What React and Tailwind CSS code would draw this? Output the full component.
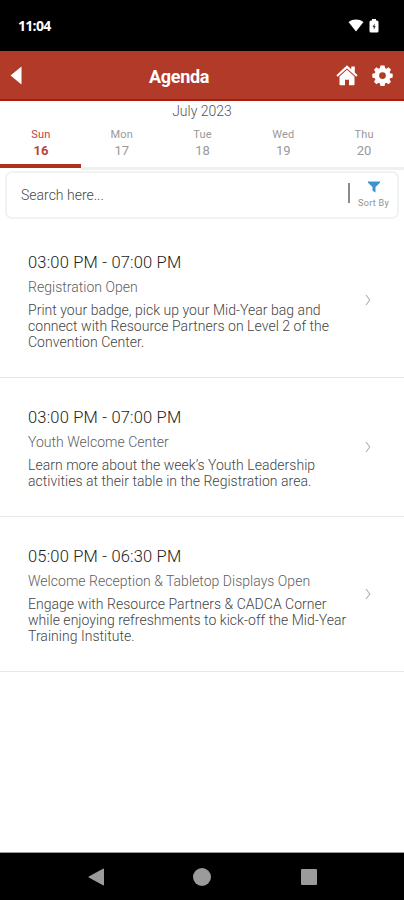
const days = [
  { name: 'Sun', date: '16', active: true },
  { name: 'Mon', date: '17' },
  { name: 'Tue', date: '18' },
  { name: 'Wed', date: '19' },
  { name: 'Thu', date: '20' },
];

const sessions = [
  {
    time: '03:00 PM - 07:00 PM',
    title: 'Registration Open',
    lines: ['Print your badge, pick up your Mid-Year bag and', 'connect with Resource Partners on Level 2 of the', 'Convention Center.'],
  },
  {
    time: '03:00 PM - 07:00 PM',
    title: 'Youth Welcome Center',
    lines: ['Learn more about the week’s Youth Leadership', 'activities at their table in the Registration area.'],
  },
  {
    time: '05:00 PM - 06:30 PM',
    title: 'Welcome Reception & Tabletop Displays Open',
    lines: ['Engage with Resource Partners & CADCA Corner', 'while enjoying refreshments to kick-off the Mid-Year', 'Training Institute.'],
  },
];

function StatusBar() {
  return (
    <div className="flex h-[51px] items-center justify-between bg-black pr-[25px] pl-[18px] text-white">
      <span className="pt-px font-['Open_Sans',sans-serif] text-[14px] leading-none font-bold tracking-[-0.7px]">11:04</span>
      <div className="flex items-center gap-[5px]">
        <svg width="16" height="13" viewBox="0 0 16 13" fill="#fff">
          <path d="M.5 3C4.800-.3 11.200-.3 15.500 3L8 12.500Z" />
        </svg>
        <svg width="10" height="14" viewBox="0 0 10 14">
          <path d="M3 0h4v1.500h1q1.500 0 1.500 1.500v9q0 1.500-1.500 1.500H2Q.5 13.500.5 12V3Q.5 1.500 2 1.500h1Z" fill="#fff" />
          <path d="M5.600 4.500 3.500 8.100h1.300V10.800L6.700 7.200H5.600Z" fill="#333" />
        </svg>
      </div>
    </div>
  );
}

function Header() {
  return (
    <div className="flex h-[50px] items-center border-b-2 border-[#ad1c0b] bg-[#b23a29] pr-[11px] pl-[10px]">
      <svg width="12" height="19" viewBox="0 0 12 19" fill="#fff">
        <path d="M11.500.5v18L.5 9.500Z" />
      </svg>
      <h1 className="ml-[127px] grow pt-[3px] text-[18px] leading-none font-bold tracking-[-0.3px] text-white">Agenda</h1>
      <svg className="mr-[14px]" width="22" height="21" viewBox="0 0 22 21" fill="#fff">
        <path d="M11 .3 .4 10.200l1.300 1.500L11 3.400l9.300 8.300 1.300-1.500-2.800-2.700V1.500h-3.500v2.800Z" />
        <path d="M11 4.800 3.500 11.600v7.900q0 .8.800.8h4.700v-5.500h4v5.500h4.700q.8 0 .8-.8v-7.900Z" />
      </svg>
      <svg width="21" height="21" viewBox="0 0 21 21" fill="#fff">
        <path
          fillRule="evenodd"
          d="M8.500 .6h4l.6 2.500 1.300.6 2.200-1.400 2.400 2.400-1.400 2.200.6 1.300 2.500.5v3.900l-2.500.6-.6 1.300 1.400 2.200-2.400 2.500-2.200-1.400-1.300.6-.6 2.500h-4l-.6-2.500-1.300-.6-2.200 1.400-2.400-2.500 1.400-2.200-.6-1.300-2.500-.6V8.700l2.500-.5.6-1.300L2 4.700l2.400-2.400 2.200 1.400 1.300-.6ZM10.500 7.200a3.400 3.400 0 1 0 0 6.800 3.400 3.400 0 0 0 0-6.800Z"
        />
      </svg>
    </div>
  );
}

function DayTabs() {
  return (
    <div className="h-[68px] bg-white">
      <div className="h-[26px] pt-[2px] text-center text-[14px] leading-4 font-light text-[#555]">July 2023</div>
      <div className="grid grid-cols-5 text-center">
        {days.map((d) => (
          <div
            key={d.name}
            className={
              d.active
                ? 'h-[41px] border-b-[4px] border-[#b03020] text-[#b8453a]'
                : 'h-[43px] border-b-[3px] border-[#f0f0f0] text-[#999]'
            }
          >
            <div className="pl-px text-[11px] leading-4 tracking-[0.2px]">{d.name}</div>
            <div className="pl-px text-[13px] leading-4">{d.active ? <b>{d.date}</b> : d.date}</div>
          </div>
        ))}
      </div>
    </div>
  );
}

function SearchBox() {
  return (
    <div className="h-[54px] px-[5px] pt-[2px]">
      <div className="flex h-[48px] items-center rounded-[7px] border-2 border-[#f1f3f3] bg-white pr-[8px] pl-[14px]">
        <span className="grow pt-px text-[14px] font-light text-[#484848]">Search here...</span>
        <span className="mr-[8px] mb-[5px] h-[20px] w-[2px] bg-[#8a8a8a]" />
        <div className="flex flex-col items-center">
          <svg width="12" height="12" viewBox="0 0 12 12" fill="#3b93cf">
            <path d="M0 .5h12v1.300L7.500 6v5.500L4.500 9.800V6L0 1.800Z" />
          </svg>
          <span className="mt-[4px] text-[9px] leading-[12px] tracking-[0.3px] whitespace-nowrap text-[#909090]">Sort By</span>
        </div>
      </div>
    </div>
  );
}

function Session({ time, title, lines }) {
  return (
    <div className="flex items-center justify-between border-b-[1.500px] border-[#e8e8e8] pr-[33px] pl-[28px]">
      <div className="pt-[30px] pb-[27px] whitespace-nowrap">
        <div className="text-[16.500px] leading-[19px] font-light tracking-[0.19px] text-[#222]">{time}</div>
        <div className="mt-[7px] text-[14px] leading-[17px] font-light tracking-[0.02px] text-[#606060]">{title}</div>
        <div className="mt-[6px] text-[14px] leading-4 font-light tracking-[0.03px] text-[#444]">
          {lines.map((l) => (
            <div key={l}>{l}</div>
          ))}
        </div>
      </div>
      <svg width="6" height="12" viewBox="0 0 6 12" fill="none" stroke="#b0b0b0" strokeWidth="1.100">
        <path d="M1 1l3.800 5L1 11" />
      </svg>
    </div>
  );
}

function NavBar() {
  return (
    <div className="flex h-[48px] items-center justify-between border-t border-[#999] bg-black pr-[87px] pl-[88px]">
      <svg width="17" height="18" viewBox="0 0 17 18" fill="#9b9b9b">
        <path d="M15 .7q1-.5 1 .6v15.400q0 1.100-1 .6L.8 9.600Q0 9 .8 8.400Z" />
      </svg>
      <span className="mr-[2px] size-[18px] rounded-full bg-[#9b9b9b]" />
      <span className="size-[16px] rounded-[1px] bg-[#9b9b9b]" />
    </div>
  );
}

export default function App() {
  return (
    <div className="flex h-[900px] w-[404px] flex-col overflow-hidden bg-white font-[Roboto,sans-serif]">
      <StatusBar />
      <Header />
      <DayTabs />
      <SearchBox />
      <div className="grow">
        {sessions.map((s, i) => (
          <Session key={i} {...s} />
        ))}
      </div>
      <NavBar />
    </div>
  );
}
